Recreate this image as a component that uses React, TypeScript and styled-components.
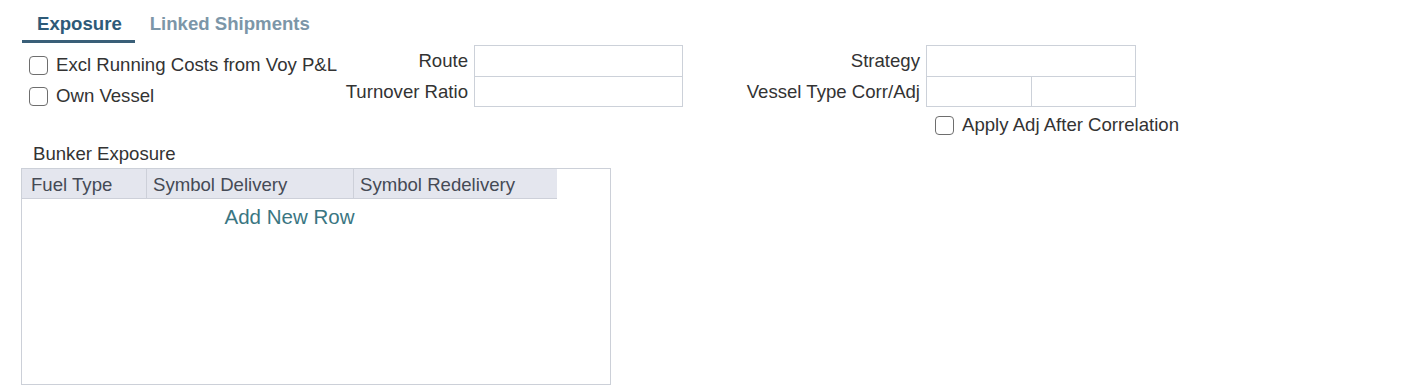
import React from "react";
import styled, { createGlobalStyle } from "styled-components";

const GlobalStyle = createGlobalStyle`
  html, body {
    margin: 0;
    padding: 0;
    background: #fff;
    font-family: "Liberation Sans", Arial, sans-serif;
    color: #333;
  }
`;

const Page = styled.div`
  padding: 0 0 0 21px;
  font-size: 18.6px;
`;

const TabBar = styled.div`
  display: flex;
  padding-left: 1px;
`;

const Tab = styled.div<{ $active?: boolean }>`
  padding: 13px 13px 5px 15px;
  line-height: 22px;
  font-weight: bold;
  color: ${({ $active }) => ($active ? "#2e5a78" : "#7c96a8")};
  border-bottom: 3px solid ${({ $active }) => ($active ? "#3a5f78" : "transparent")};
  cursor: pointer;
`;

const FormGrid = styled.div`
  display: grid;
  grid-template-columns: 318px 135px 209px 243px 210px;
  grid-template-rows: 32px 30px 33px;
  margin-top: 2px;
`;

const CheckList = styled.div`
  grid-column: 1;
  grid-row: 1 / span 2;
  display: flex;
  flex-direction: column;
  gap: 11px;
  padding: 10px 0 0 8px;
`;

const CheckRow = styled.label<{ $inset?: number }>`
  display: flex;
  align-items: center;
  gap: 8px;
  white-space: nowrap;
  line-height: 20px;
  padding-left: ${({ $inset }) => $inset ?? 0}px;
`;

const Box = styled.span`
  width: 19px;
  height: 19px;
  box-sizing: border-box;
  border: 1.5px solid #6e6e6e;
  border-radius: 4px;
  flex: none;
  background: #fff;
`;

const Label = styled.div`
  display: flex;
  align-items: center;
  justify-content: flex-end;
  padding-right: 6px;
  white-space: nowrap;
  line-height: 22px;
`;

const Input = styled.div<{ $top?: boolean }>`
  box-sizing: border-box;
  height: ${({ $top }) => ($top ? 32 : 31)}px;
  margin-top: ${({ $top }) => ($top ? 0 : -1)}px;
  border: 1px solid #ccd1d9;
  background: #fff;
`;

const InputPair = styled.div`
  display: flex;
  margin-top: -1px;
  height: 31px;

  ${Input} {
    margin-top: 0;
    flex: 1;
  }
  ${Input} + ${Input} {
    margin-left: -1px;
  }
`;

const ApplyCell = styled.div`
  grid-column: 5;
  grid-row: 3;
  padding-top: 8px;
`;

const Section = styled.div`
  margin-top: 3px;
`;

const SectionTitle = styled.div`
  padding-left: 12px;
  line-height: 22px;
  margin-bottom: 3px;
`;

const Table = styled.div`
  box-sizing: border-box;
  width: 590px;
  height: 217px;
  border: 1px solid #ccd0d8;
  background: #fff;
`;

const HeaderRow = styled.div`
  display: flex;
  width: 535px;
  height: 30px;
  box-sizing: border-box;
  background: #e4e6ee;
  border-bottom: 1px solid #cdd0d9;
`;

const HeaderCell = styled.div<{ $width: number }>`
  width: ${({ $width }) => $width}px;
  box-sizing: border-box;
  padding: 2px 0 0 9px;
  line-height: 27px;
  color: #454a55;
  white-space: nowrap;
  & + & {
    border-left: 1px solid #cdd0d9;
    padding-left: 6px;
  }
`;

const AddRow = styled.div`
  width: 535px;
  text-align: center;
  line-height: 36px;
  font-size: 20.5px;
  color: #3a7682;
  cursor: pointer;
`;

const Check: React.FC<{ label: string; inset?: number }> = ({ label, inset }) => (
  <CheckRow $inset={inset}>
    <Box />
    {label}
  </CheckRow>
);

export default function App() {
  return (
    <Page>
      <GlobalStyle />
      <TabBar>
        <Tab $active>Exposure</Tab>
        <Tab>Linked Shipments</Tab>
      </TabBar>

      <FormGrid>
        <CheckList>
          <Check label="Excl Running Costs from Voy P&L" />
          <Check label="Own Vessel" />
        </CheckList>

        <Label style={{ gridColumn: 2, gridRow: 1 }}>Route</Label>
        <Input $top style={{ gridColumn: 3, gridRow: 1 }} />
        <Label style={{ gridColumn: 2, gridRow: 2 }}>Turnover Ratio</Label>
        <Input style={{ gridColumn: 3, gridRow: 2 }} />

        <Label style={{ gridColumn: 4, gridRow: 1 }}>Strategy</Label>
        <Input $top style={{ gridColumn: 5, gridRow: 1 }} />
        <Label style={{ gridColumn: 4, gridRow: 2 }}>Vessel Type Corr/Adj</Label>
        <InputPair style={{ gridColumn: 5, gridRow: 2 }}>
          <Input />
          <Input />
        </InputPair>

        <ApplyCell>
          <Check label="Apply Adj After Correlation" inset={9} />
        </ApplyCell>
      </FormGrid>

      <Section>
        <SectionTitle>Bunker Exposure</SectionTitle>
        <Table>
          <HeaderRow>
            <HeaderCell $width={124}>Fuel Type</HeaderCell>
            <HeaderCell $width={207}>Symbol Delivery</HeaderCell>
            <HeaderCell $width={204}>Symbol Redelivery</HeaderCell>
          </HeaderRow>
          <AddRow>Add New Row</AddRow>
        </Table>
      </Section>
    </Page>
  );
}
